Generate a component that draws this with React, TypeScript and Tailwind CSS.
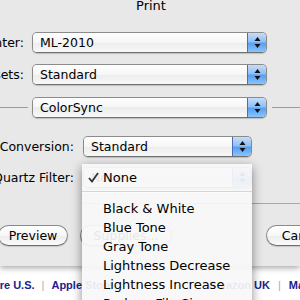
import React from "react";

const font = { fontFamily: '"DejaVu Sans", "Liberation Sans", sans-serif' };

function Arrows({ faded = false }: { faded?: boolean }) {
  const c = faded ? "#9aa" : "#111";
  return (
    <svg width="7" height="13" viewBox="0 0 7 13">
      <path d="M3.5 1 L6.5 5 L0.5 5 Z" fill={c} />
      <path d="M3.5 12 L6.5 8 L0.5 8 Z" fill={c} />
    </svg>
  );
}

function Popup({ text, className }: { text: string; className: string }) {
  return (
    <div
      className={
        "flex h-[21px] shrink-0 overflow-hidden rounded-[5px] border border-[#8b8b8b] border-b-[#707070] shadow-[0_1px_1px_rgba(0,0,0,0.18)] " +
        className
      }
    >
      <div className="flex flex-1 items-center bg-[linear-gradient(#fefefe,#f6f6f6_50%,#ececec_50%,#f8f8f8)] pl-[7px] text-[12.5px] leading-[19px] text-black">
        {text}
      </div>
      <div className="flex w-[19px] items-center justify-center border-l border-[#4d6db3] bg-[linear-gradient(#c6defa,#8fc0f6_45%,#5a9ff0_55%,#86c5fd)]">
        <Arrows />
      </div>
    </div>
  );
}

function Label({ text, className }: { text: string; className: string }) {
  return (
    <div
      className={
        "flex shrink-0 justify-end whitespace-nowrap text-[12.5px] leading-[19px] text-black " + className
      }
    >
      {text}
    </div>
  );
}

function Button({ text, className }: { text: string; className: string }) {
  return (
    <div
      className={
        "flex h-[21px] shrink-0 items-center justify-center rounded-full border border-[#8a8a8a] border-b-[#6e6e6e] bg-[linear-gradient(#ffffff,#f7f7f7_50%,#ececec_50%,#fafafa)] text-[12.5px] leading-[19px] text-black shadow-[0_1px_1px_rgba(0,0,0,0.15)] " +
        className
      }
    >
      {text}
    </div>
  );
}

const menuItems = [
  "Black & White",
  "Blue Tone",
  "Gray Tone",
  "Lightness Decrease",
  "Lightness Increase",
  "Reduce File Size",
];

export default function App() {
  return (
    <div className="relative h-[300px] w-[300px] overflow-hidden bg-white" style={font}>
      {/* dialog */}
      <div className="relative z-10 flex h-[266px] flex-col bg-[#e8e8e8] shadow-[0_2px_6px_rgba(0,0,0,0.35)]">
        <div className="-mt-[2px] flex h-[16px] justify-center text-[13px] leading-[16px] text-black">
          <span className="ml-[2px]">Print</span>
        </div>

        <div className="mt-[18px] flex h-[21px] items-center">
          <Label text="Printer:" className="w-[24px]" />
          <Popup text="ML-2010" className="ml-[8px] w-[235px]" />
        </div>

        <div className="mt-[11px] flex h-[21px] items-center">
          <Label text="Presets:" className="w-[24px]" />
          <Popup text="Standard" className="ml-[8px] w-[235px]" />
        </div>

        <div className="mt-[12px] flex h-[21px] items-center">
          <div className="h-px w-[28px] bg-[#9c9c9c]" />
          <Popup text="ColorSync" className="ml-[4px] w-[235px]" />
          <div className="ml-[5px] h-px flex-1 bg-[#9c9c9c]" />
        </div>

        <div className="mt-[18px] flex h-[21px] items-center">
          <Label text="Conversion:" className="w-[74px]" />
          <Popup text="Standard" className="ml-[9px] w-[169px]" />
        </div>

        <div className="mt-[10px] flex h-[21px] items-center">
          <Label text="Quartz Filter:" className="w-[74px]" />
          <Popup text="None" className="ml-[9px] w-[169px]" />
        </div>

        <div className="ml-[82px] mt-[15px] h-px bg-[#a8a8a8]" />

        <div className="mt-[21px] flex h-[21px] items-center">
          <Button text="Preview" className="-ml-[2px] w-[70px]" />
          <Button text="Supplies..." className="ml-[12px] w-[92px]" />
          <Button text="Cancel" className="ml-auto -mr-[40px] w-[74px]" />
        </div>
      </div>

      {/* page behind */}
      <div className="flex h-[34px] items-end pb-[9px]">
        <div
          className="flex whitespace-nowrap text-[11px] font-bold leading-[12px] text-[#22208c]"
          style={{ fontFamily: '"Liberation Sans", Arial, sans-serif' }}
        >
          <span className="-ml-[18px]">Store U.S.</span>
          <span className="mx-[7px] font-normal text-[#aaaaaa]">|</span>
          <span>Apple Store</span>
          <span className="ml-[95px]">Amazon UK</span>
          <span className="mx-[8px] font-normal text-[#aaaaaa]">|</span>
          <span>Mac Store</span>
        </div>
      </div>
      <div className="h-[3px] w-[16px] bg-[#dddddd]" />

      {/* open menu */}
      <div className="absolute left-[82px] top-[164px] z-20 h-[150px] w-[170px] bg-[rgba(247,247,247,0.93)] shadow-[0_3px_10px_rgba(0,0,0,0.45)]">
        <div className="flex h-[27px] items-center text-[13px] leading-[19px] text-black">
          <svg className="ml-[6px]" width="11" height="11" viewBox="0 0 11 11">
            <path d="M1 6 L4 9.5 L10 1" fill="none" stroke="#333" strokeWidth="1.8" />
          </svg>
          <span className="ml-[4px]">None</span>
        </div>
        <div className="h-px bg-[#d6d6d6]" />
        <div className="h-px bg-[#fbfbfb]" />
        <div className="pt-[6px]">
          {menuItems.map((m) => (
            <div key={m} className="h-[19px] pl-[21px] text-[13px] leading-[19px] text-black">
              {m}
            </div>
          ))}
        </div>
      </div>
    </div>
  );
}
